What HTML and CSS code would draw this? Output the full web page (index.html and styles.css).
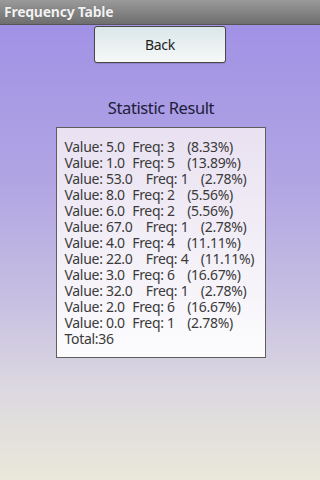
FILE: index.html
```html
<!DOCTYPE html>
<html>
<head>
<meta charset="utf-8">
<link rel="stylesheet" href="styles.css">
</head>
<body>
<div class="screen">
  <div class="titlebar">Frequency Table</div>
  <div class="content">
    <div class="btn">Back</div>
    <div class="heading">Statistic Result</div>
    <div class="result">
      <div class="row"><span class="val">Value: 5.0</span><span class="freq">Freq: 3</span><span>(8.33%)</span></div>
      <div class="row"><span class="val">Value: 1.0</span><span class="freq">Freq: 5</span><span>(13.89%)</span></div>
      <div class="row"><span class="val wide">Value: 53.0</span><span class="freq">Freq: 1</span><span>(2.78%)</span></div>
      <div class="row"><span class="val">Value: 8.0</span><span class="freq">Freq: 2</span><span>(5.56%)</span></div>
      <div class="row"><span class="val">Value: 6.0</span><span class="freq">Freq: 2</span><span>(5.56%)</span></div>
      <div class="row"><span class="val wide">Value: 67.0</span><span class="freq">Freq: 1</span><span>(2.78%)</span></div>
      <div class="row"><span class="val">Value: 4.0</span><span class="freq">Freq: 4</span><span>(11.11%)</span></div>
      <div class="row"><span class="val wide">Value: 22.0</span><span class="freq">Freq: 4</span><span>(11.11%)</span></div>
      <div class="row"><span class="val">Value: 3.0</span><span class="freq">Freq: 6</span><span>(16.67%)</span></div>
      <div class="row"><span class="val wide">Value: 32.0</span><span class="freq">Freq: 1</span><span>(2.78%)</span></div>
      <div class="row"><span class="val">Value: 2.0</span><span class="freq">Freq: 6</span><span>(16.67%)</span></div>
      <div class="row"><span class="val">Value: 0.0</span><span class="freq">Freq: 1</span><span>(2.78%)</span></div>
      <div class="row">Total:36</div>
    </div>
  </div>
</div>
</body>
</html>
```
FILE: styles.css
```css
html, body {
  margin: 0;
  padding: 0;
}
body {
  font-family: "Noto Sans", "Open Sans", "DejaVu Sans", sans-serif;
}
.screen {
  width: 320px;
  height: 480px;
  display: flex;
  flex-direction: column;
  overflow: hidden;
}
.titlebar {
  height: 24px;
  border-bottom: 1px solid #565656;
  background: linear-gradient(#9a9a9a, #6e6e6e);
  color: #f2f2f2;
  font-weight: bold;
  font-size: 14px;
  letter-spacing: -0.25px;
  line-height: 24px;
  padding-left: 4px;
  text-shadow: 0 0 1px rgba(0,0,0,0.3);
}
.content {
  flex: 1;
  display: flex;
  flex-direction: column;
  align-items: center;
  background: linear-gradient(#a292e6 0%, #b1a5e3 35%, #c9c1e2 62%, #dcd8e0 80%, #e9e8d9 100%);
}
.btn {
  margin-top: 1px;
  width: 129.5px;
  height: 35px;
  border: 1.5px solid #484848;
  border-radius: 3px;
  background: linear-gradient(#dae7e9, #f7f8f8);
  display: flex;
  align-items: center;
  justify-content: center;
  font-size: 14px;
  letter-spacing: -0.3px;
  color: #1e1e1e;
  box-shadow: 0 1px 1px rgba(0,0,0,0.15);
}
.heading {
  margin-top: 33px;
  height: 24px;
  line-height: 24px;
  font-size: 16.5px;
  letter-spacing: -0.4px;
  color: #20203a;
  padding-left: 2px;
}
.result {
  margin-top: 7px;
  width: 200px;
  border: 1.5px solid #5e5e5e;
  background: linear-gradient(#e9e1f1, #fcfcfd);
  padding: 10.5px 0 10px 8px;
  margin-left: 1px;
  font-size: 14px;
  letter-spacing: -0.3px;
  line-height: 16px;
  color: #3a3a3a;
}
.row {
  white-space: nowrap;
}
.val {
  display: inline-block;
  width: 67.7px;
}
.val.wide {
  width: 81.3px;
}
.freq {
  display: inline-block;
  width: 55px;
}
```
